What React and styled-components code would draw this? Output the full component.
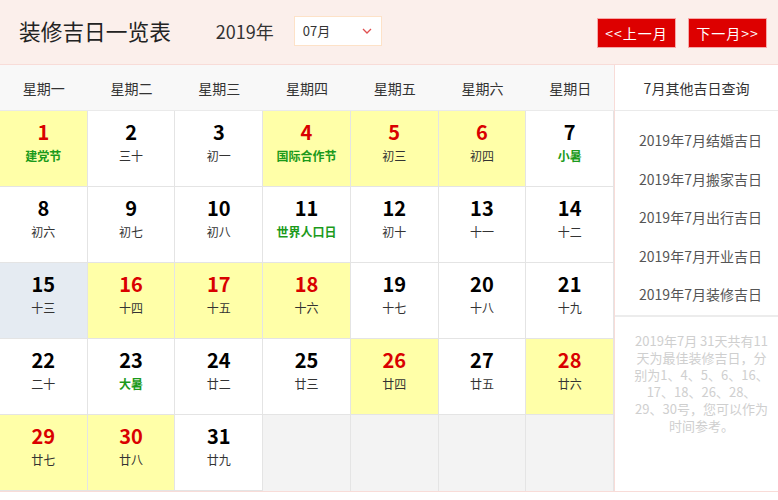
import styled, { createGlobalStyle } from "styled-components";

const GlobalStyle = createGlobalStyle`
  body {
    margin: 0;
    background: #fff;
    font-family: "Noto Sans CJK SC", "Noto Sans", sans-serif;
    color: #333;
  }
`;

const days = [
  { d: 1, l: "建党节", good: true, fest: true },
  { d: 2, l: "三十" },
  { d: 3, l: "初一" },
  { d: 4, l: "国际合作节", good: true, fest: true },
  { d: 5, l: "初三", good: true },
  { d: 6, l: "初四", good: true },
  { d: 7, l: "小暑", fest: true },
  { d: 8, l: "初六" },
  { d: 9, l: "初七" },
  { d: 10, l: "初八" },
  { d: 11, l: "世界人口日", fest: true },
  { d: 12, l: "初十" },
  { d: 13, l: "十一" },
  { d: 14, l: "十二" },
  { d: 15, l: "十三", today: true },
  { d: 16, l: "十四", good: true },
  { d: 17, l: "十五", good: true },
  { d: 18, l: "十六", good: true },
  { d: 19, l: "十七" },
  { d: 20, l: "十八" },
  { d: 21, l: "十九" },
  { d: 22, l: "二十" },
  { d: 23, l: "大暑", fest: true },
  { d: 24, l: "廿二" },
  { d: 25, l: "廿三" },
  { d: 26, l: "廿四", good: true },
  { d: 27, l: "廿五" },
  { d: 28, l: "廿六", good: true },
  { d: 29, l: "廿七", good: true },
  { d: 30, l: "廿八", good: true },
  { d: 31, l: "廿九" },
];

const weekNames = ["星期一", "星期二", "星期三", "星期四", "星期五", "星期六", "星期日"];
const links = ["结婚吉日", "搬家吉日", "出行吉日", "开业吉日", "装修吉日"];

const App = () => {
  return (
    <Page>
      <GlobalStyle />
      <TopBar>
        <Title>装修吉日一览表</Title>
        <Year>2019年</Year>
        <MonthSelect>
          <span>07月</span>
          <svg width="10" height="6" viewBox="0 0 10 6">
            <path d="M1 1l4 4 4-4" fill="none" stroke="#e05050" strokeWidth="1.3" />
          </svg>
        </MonthSelect>
        <Spacer />
        <NavButton>&lt;&lt;上一月</NavButton>
        <NavButton>下一月&gt;&gt;</NavButton>
      </TopBar>

      <Body>
        <Calendar>
          <WeekRow>
            {weekNames.map((w) => (
              <WeekCell key={w}>{w}</WeekCell>
            ))}
          </WeekRow>
          <DayGrid>
            {days.map((x) => (
              <DayCell key={x.d} $good={x.good} $today={x.today}>
                <DayNum $good={x.good}>{x.d}</DayNum>
                <Lunar $fest={x.fest}>{x.l}</Lunar>
              </DayCell>
            ))}
            {[1, 2, 3, 4].map((i) => (
              <EmptyCell key={"e" + i} />
            ))}
          </DayGrid>
        </Calendar>

        <Side>
          <SideHead>7月其他吉日查询</SideHead>
          <LinkList>
            {links.map((t) => (
              <SideLink key={t}>2019年7月{t}</SideLink>
            ))}
          </LinkList>
          <Note>
            2019年7月 31天共有11天为最佳装修吉日，分别为1、4、5、6、16、17、18、26、28、29、30号，您可以作为时间参考。
          </Note>
        </Side>
      </Body>
    </Page>
  );
};

export default App;

/* styled */

const Page = styled.div`
  width: 778px;
  height: 500px;
  overflow: hidden;
`;

const TopBar = styled.div`
  height: 64px;
  background: #fbefeb;
  border-bottom: 1px solid #f8dcd8;
  display: flex;
  align-items: center;
  padding: 0 11px 0 19px;
`;

const Title = styled.h1`
  margin: 0 0 4px;
  font-size: 21.7px;
  font-weight: normal;
  color: #222;
`;

const Year = styled.div`
  margin-left: 45px;
  margin-bottom: 2px;
  font-size: 18px;
  color: #333;
`;

const MonthSelect = styled.div`
  margin-left: 20px;
  margin-bottom: 3px;
  width: 88px;
  height: 30px;
  box-sizing: border-box;
  background: #fff;
  border: 1px solid #fde2c8;
  display: flex;
  align-items: center;
  justify-content: space-between;
  padding: 0 9px 0 8px;
  font-size: 13px;
  color: #333;
`;

const Spacer = styled.div`
  flex: 1;
`;

const NavButton = styled.div`
  width: 79px;
  height: 30px;
  box-sizing: border-box;
  margin-left: 12px;
  margin-top: 2px;
  background: #dd0000;
  border: 1px solid #f6a8a8;
  color: #fff;
  font-size: 14px;
  display: flex;
  align-items: center;
  justify-content: center;
  letter-spacing: 1px;
`;

const Body = styled.div`
  display: flex;
  border-bottom: 1px solid #f8dcd8;
`;

const Calendar = styled.div`
  width: 614px;
`;

const WeekRow = styled.div`
  display: grid;
  grid-template-columns: repeat(7, 1fr);
  height: 45px;
  background: #f8f8f8;
  border-bottom: 1px solid #eaeaea;
`;

const WeekCell = styled.div`
  display: flex;
  align-items: center;
  justify-content: center;
  font-size: 14px;
  color: #333;
`;

const DayGrid = styled.div`
  display: grid;
  grid-template-columns: repeat(7, 1fr);
  grid-auto-rows: 76px;
`;

const DayCell = styled.div`
  background: ${(p) => (p.$today ? "#e5ebf2" : p.$good ? "#ffffa8" : "#fff")};
  border-right: 1px solid #e4e4e4;
  border-bottom: 1px solid #e4e4e4;
  display: flex;
  flex-direction: column;
  align-items: center;
  padding-top: 8px;
  box-sizing: border-box;
`;

const EmptyCell = styled.div`
  background: #f3f3f3;
  border-right: 1px solid #e4e4e4;
`;

const DayNum = styled.div`
  font-size: 20px;
  font-weight: bold;
  line-height: 26px;
  color: ${(p) => (p.$good ? "#d90000" : "#000")};
`;

const Lunar = styled.div`
  margin-top: 3px;
  font-size: 12px;
  line-height: 16px;
  font-weight: ${(p) => (p.$fest ? "bold" : "normal")};
  color: ${(p) => (p.$fest ? "#1b9a1b" : "#333")};
`;

const Side = styled.div`
  flex: 1;
  border-left: 1px solid #f8dcd8;
  display: flex;
  flex-direction: column;
`;

const SideHead = styled.div`
  height: 45px;
  border-bottom: 1px solid #eaeaea;
  display: flex;
  align-items: center;
  justify-content: center;
  font-size: 14px;
  color: #333;
`;

const LinkList = styled.div`
  padding: 10px 0 1px;
  border-bottom: 2px solid #ececec;
  display: flex;
  flex-direction: column;
  align-items: center;
`;

const SideLink = styled.div`
  height: 38.6px;
  line-height: 38.6px;
  font-size: 14px;
  color: #555;
  padding-left: 8px;
`;

const Note = styled.p`
  margin: 0;
  padding: 15px 8px 0 18px;
  height: 159px;
  font-size: 13px;
  line-height: 17px;
  text-align: center;
  color: #cfcfcf;
`;
